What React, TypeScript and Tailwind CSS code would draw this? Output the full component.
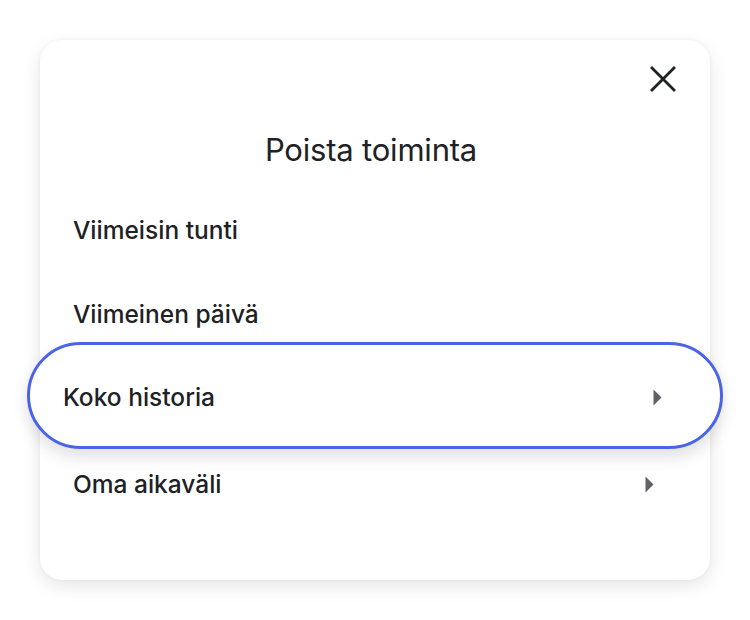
import React from "react";

const Arrow = () => (
  <svg width="9" height="17" viewBox="0 0 9 17" className="shrink-0">
    <path d="M0.5 0.5 L8.5 8.5 L0.5 16.5 Z" fill="#5f6368" />
  </svg>
);

export default function App() {
  const font = { fontFamily: '"Inter", "Open Sans", sans-serif' };
  return (
    <div className="w-[750px] h-[620px] bg-white pt-[40px] px-[40px]" style={font}>
      <div className="h-[540px] rounded-[22px] bg-white shadow-[0_6px_18px_rgba(0,0,0,0.10),0_0_4px_rgba(0,0,0,0.04)] flex flex-col">
        <div className="flex justify-end pt-[26px] pr-[34px]">
          <svg width="26" height="26" viewBox="0 0 26 26">
            <path d="M2 2 L24 24 M24 2 L2 24" stroke="#202124" strokeWidth="2.8" strokeLinecap="square" />
          </svg>
        </div>
        <div className="mt-[40px] pr-[8px] text-center text-[31px] leading-[36px] text-[#202124] tracking-[-0.2px]">
          Poista toiminta
        </div>
        <div className="mt-[20px] flex flex-col">
          <div className="h-[84px] flex items-center pl-[33px] text-[24.5px] font-medium text-[#202124]">
            Viimeisin tunti
          </div>
          <div className="h-[84px] flex items-center pl-[33px] text-[24.5px] font-medium text-[#202124]">
            Viimeinen päivä
          </div>
          <div className="-mx-[13px] -mt-[14px] h-[107px] rounded-full border-[3px] border-[#4a63e7] bg-white shadow-[0_8px_16px_rgba(0,0,0,0.12)] flex items-center justify-between pl-[33px] pr-[58px] pt-[3px] text-[24.5px] font-medium text-[#202124]">
            <span>Koko historia</span>
            <Arrow />
          </div>
          <div className="h-[70px] flex items-center justify-between pl-[33px] pr-[56px] text-[24.5px] font-medium text-[#202124]">
            <span>Oma aikaväli</span>
            <Arrow />
          </div>
        </div>
      </div>
    </div>
  );
}
